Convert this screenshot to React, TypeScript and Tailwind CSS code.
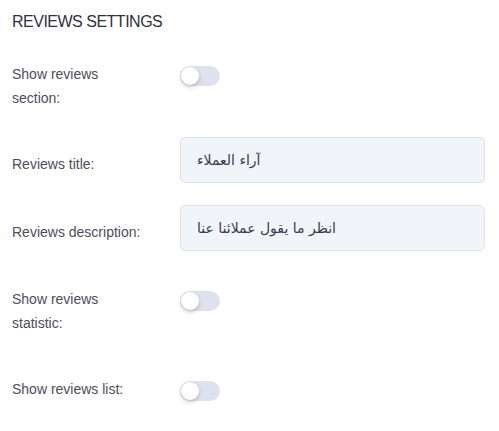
import React from "react";

function Toggle() {
  return (
    <div className="mt-1 relative h-5 w-10 rounded-full bg-[#dfe2ee]">
      <div className="absolute left-[1px] top-[1px] h-[18px] w-[18px] rounded-full bg-white shadow-[0_2px_4px_rgba(40,40,80,0.25)]" />
    </div>
  );
}

function Label({ children, top = 0 }: { children: React.ReactNode; top?: number }) {
  return (
    <div
      className={
        "w-[168px] shrink-0 pr-[36px] text-[14px] leading-6 text-[#4d4d5c] " +
        (top ? "mt-[15px]" : "")
      }
    >
      {children}
    </div>
  );
}

function Input({ value }: { value: string }) {
  return (
    <div className="flex h-[46px] w-[305px] items-center rounded-[5px] border border-[#dde2eb] bg-[#f1f4f9] px-4 text-[14px] text-[#3a3a48] [font-family:'DejaVu_Sans','Noto_Sans',sans-serif]">
      <span dir="rtl">{value}</span>
    </div>
  );
}

export default function App() {
  return (
    <div className="min-h-[431px] w-[499px] bg-white pl-3 [font-family:'Liberation_Sans',Arial,sans-serif]">
      <div className="pt-[12px] text-[16px] leading-5 tracking-[-0.5px] text-[#30303e]">REVIEWS SETTINGS</div>

      <div className="mt-[30px] flex items-start">
        <Label>Show reviews section:</Label>
        <Toggle />
      </div>

      <div className="mt-[27px] flex items-start">
        <Label top={1}>Reviews title:</Label>
        <Input value="آراء العملاء" />
      </div>

      <div className="mt-[22px] flex items-start">
        <Label top={1}>Reviews description:</Label>
        <Input value="انظر ما يقول عملائنا عنا" />
      </div>

      <div className="mt-[36px] flex items-start">
        <Label>Show reviews statistic:</Label>
        <Toggle />
      </div>

      <div className="mt-[42px] flex items-start">
        <Label>Show reviews list:</Label>
        <Toggle />
      </div>
    </div>
  );
}
